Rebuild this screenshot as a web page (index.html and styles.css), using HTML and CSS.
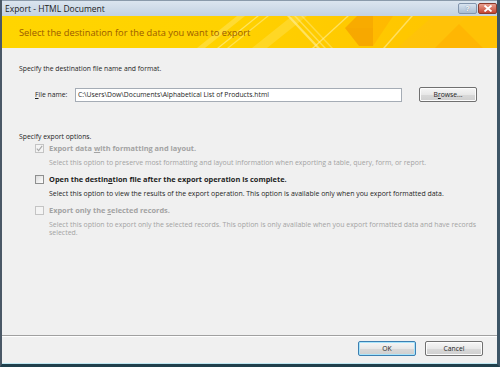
FILE: index.html
```html
<!DOCTYPE html>
<html>
<head>
<meta charset="utf-8">
<link rel="stylesheet" href="styles.css">
</head>
<body>
<div class="window">
  <div class="titlebar">
    <span class="title">Export - HTML Document</span>
    <div class="caption-buttons">
      <span class="cap-btn help">?</span>
      <span class="cap-btn close">
        <svg width="10" height="7" viewBox="0 0 10 7"><path d="M1.5 0.5 L8.5 6.5 M8.5 0.5 L1.5 6.5" stroke="#fff" stroke-width="1.8"/></svg>
      </span>
    </div>
  </div>
  <div class="banner">
    <svg class="banner-art" width="300" height="32" viewBox="0 0 300 32" preserveAspectRatio="none">
      <polygon points="0,32 40,0 48,0 8,32" fill="#ffe566" opacity="0.5"/>
      <polygon points="20,32 60,0 62,0 22,32" fill="#fff2a0" opacity="0.6"/>
      <polygon points="30,32 70,0 72,0 32,32" fill="#fff2a0" opacity="0.5"/>
      <polygon points="55,32 95,0 110,0 70,32" fill="#ffe04a" opacity="0.5"/>
      <polygon points="90,0 120,32 123,32 93,0" fill="#fff0a0" opacity="0.6"/>
      <polygon points="97,0 127,32 129,32 99,0" fill="#fff0a0" opacity="0.5"/>
      <polygon points="104,0 134,32 136,32 106,0" fill="#fff0a0" opacity="0.4"/>
      <polygon points="115,32 150,0 152,0 117,32" fill="#fff0a0" opacity="0.6"/>
      <polygon points="160,0 148,12 176,12 176,0" fill="#f7a600" opacity="0.85"/>
      <polygon points="148,12 162,30 176,30 176,12" fill="#f5a000" opacity="0.8"/>
      <polygon points="176,0 176,30 196,0" fill="#ffb300" opacity="0.7"/>
      <polygon points="186,32 214,0 216,0 188,32" fill="#fff0a0" opacity="0.6"/>
      <polygon points="200,32 236,0 300,0 300,32" fill="#ffbf10" opacity="0.55"/>
      <polygon points="238,32 262,8 286,32" fill="#ffad00" opacity="0.6"/>
      <polygon points="262,8 270,0 300,0 300,32 286,32" fill="#ffc400" opacity="0.4"/>
    </svg>
    <span class="banner-text">Select the destination for the data you want to export</span>
  </div>
  <div class="content">
    <p class="section">Specify the destination file name and format.</p>
    <div class="file-row">
      <label class="file-label"><u>F</u>ile name:</label>
      <div class="input">C:\Users\Dow\Documents\Alphabetical List of Products.html</div>
      <div class="btn browse">B<u>r</u>owse...</div>
    </div>
    <p class="section options">Specify export options.</p>
    <div class="option disabled">
      <span class="cb checked">
        <svg width="7" height="7" viewBox="0 0 7 7"><path d="M0.8 3.6 L2.6 5.6 L6.2 0.8" stroke="#a8a8a8" stroke-width="1.1" fill="none"/></svg>
      </span>
      <div class="opt-text">
        <div class="opt-title">Export data <u>w</u>ith formatting and layout.</div>
        <div class="opt-desc">Select this option to preserve most formatting and layout information when exporting a table, query, form, or report.</div>
      </div>
    </div>
    <div class="option">
      <span class="cb"></span>
      <div class="opt-text">
        <div class="opt-title">Open the destin<u>a</u>tion file after the export operation is complete.</div>
        <div class="opt-desc">Select this option to view the results of the export operation. This option is available only when you export formatted data.</div>
      </div>
    </div>
    <div class="option disabled">
      <span class="cb"></span>
      <div class="opt-text">
        <div class="opt-title">Export only the <u>s</u>elected records.</div>
        <div class="opt-desc">Select this option to export only the selected records. This option is only available when you export formatted data and have records selected.</div>
      </div>
    </div>
  </div>
  <div class="footer">
    <div class="btn ok">OK</div>
    <div class="btn">Cancel</div>
  </div>
</div>
</body>
</html>
```

FILE: styles.css
```css
* { box-sizing: border-box; }
html, body { margin: 0; padding: 0; }
body {
  width: 500px;
  height: 367px;
  overflow: hidden;
  font-family: "Liberation Sans", Arial, sans-serif;
  background: #f0f0f0;
}
.window {
  width: 500px;
  height: 367px;
  display: flex;
  flex-direction: column;
  background: #f0f0f0;
  border-left: 2px solid #4a5866;
  border-right: 3px solid #3d5566;
  border-bottom: 3px solid #20404c;
  box-shadow: inset 0 -1px 0 #bfe8f2;
}
.titlebar {
  height: 16px;
  flex: none;
  display: flex;
  align-items: center;
  justify-content: space-between;
  background: linear-gradient(#dbe5ef, #c3d2e2);
  border-top: 1px solid #8a9aaa;
  padding-left: 3px;
}
.title {
  font-family: "Open Sans", "DejaVu Sans", sans-serif;
  font-size: 8.5px;
  color: #1e1e1e;
}
.caption-buttons {
  display: flex;
  gap: 1px;
  align-self: flex-start;
  margin-top: 2px;
}
.cap-btn {
  display: flex;
  align-items: center;
  justify-content: center;
  height: 11px;
  border-radius: 2px;
  font-family: "Liberation Sans", sans-serif;
  font-size: 8px;
  font-weight: bold;
}
.help {
  width: 19px;
  background: linear-gradient(#d8e4f0, #a9bcd2);
  border: 1px solid #8295ad;
  color: #fff;
  text-shadow: 0 0 1px #506080;
}
.close {
  width: 19px;
  background: linear-gradient(#e8a090, #c5442f);
  border: 1px solid #8b3a2c;
}
.banner {
  position: relative;
  height: 32px;
  flex: none;
  background: linear-gradient(90deg, #ffd500 0%, #ffd200 45%, #ffc800 75%, #ffc400 100%);
  display: flex;
  align-items: center;
  padding-left: 17px;
  padding-top: 1px;
  overflow: hidden;
}
.banner-art {
  position: absolute;
  right: 0;
  top: 0;
}
.banner-text {
  position: relative;
  font-family: "Open Sans", "DejaVu Sans", sans-serif;
  font-size: 9.3px;
  color: #9a5a00;
}
.content {
  flex: 1;
  padding: 16px 0 0 17px;
  font-family: "Open Sans", "DejaVu Sans", sans-serif;
  font-size: 6.8px;
  color: #1e1e1e;
}
.section {
  margin: 0;
  line-height: 10px;
}
.file-row {
  display: flex;
  align-items: center;
  margin-top: 13px;
  padding-left: 16px;
}
.file-label {
  width: 40px;
}
.input {
  width: 327px;
  height: 14px;
  background: #fff;
  border: 1px solid #a5acb5;
  padding-left: 2px;
  line-height: 12px;
}
.btn {
  width: 58px;
  height: 15px;
  display: flex;
  align-items: center;
  justify-content: center;
  border: 1px solid #707070;
  border-radius: 2px;
  background: linear-gradient(#f6f6f6 0%, #e8e8e8 50%, #d9d9d9 51%, #cfcfcf 100%);
  color: #1e1e1e;
  font-family: "Open Sans", "DejaVu Sans", sans-serif;
  font-size: 6.8px;
  box-shadow: inset 0 0 0 1px #fcfcfc;
}
.browse {
  margin-left: 17px;
}
.options {
  margin-top: 30px;
}
.option {
  display: flex;
  align-items: flex-start;
  padding-left: 16px;
  margin-top: 7px;
}
.options + .option { margin-top: 1px; }
.cb {
  width: 9px;
  height: 9px;
  flex: none;
  margin-top: 1px;
  border: 1px solid #8e8f8f;
  background: linear-gradient(135deg, #dcdcdc, #ffffff);
  display: flex;
  align-items: center;
  justify-content: center;
}
.disabled .cb {
  border-color: #c4c4c4;
  background: #f4f4f4;
}
.opt-text {
  margin-left: 5px;
  width: 440px;
}
.opt-title {
  font-weight: bold;
  font-size: 7.4px;
  line-height: 11px;
}
.opt-desc {
  margin-top: 5px;
  line-height: 8px;
  font-size: 6.95px;
}
.disabled .opt-title,
.disabled .opt-desc {
  color: #a3a3a3;
}
.footer {
  flex: none;
  height: 29px;
  border-top: 1px solid #a0a0a0;
  box-shadow: inset 0 1px 0 #ffffff;
  display: flex;
  justify-content: flex-end;
  align-items: flex-start;
  gap: 9px;
  padding: 5px 14px 0 0;
}
.ok {
  border-color: #3c7fb1;
  box-shadow: inset 0 0 0 1px #a8e4fb;
}
```
